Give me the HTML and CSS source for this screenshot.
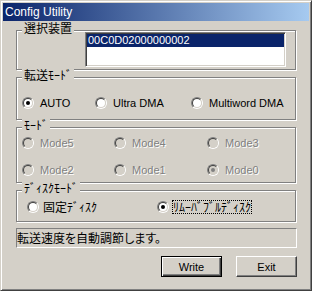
FILE: index.html
```html
<!DOCTYPE html>
<html lang="ja">
<head>
<meta charset="utf-8">
<title>Config Utility</title>
<link rel="stylesheet" href="styles.css">
</head>
<body>
<div class="window">
  <div class="titlebar">Config Utility</div>
  <div class="content">
    <div class="group g1">
      <span class="legend ja">選択装置</span>
      <div class="listbox">
        <div class="item selected">00C0D02000000002</div>
      </div>
    </div>

    <div class="group g2">
      <span class="legend ja">転送ﾓｰﾄﾞ</span>
      <div class="opts">
        <div class="opt"><span class="radio"><span class="radio-in"><span class="dot"></span></span></span><span>AUTO</span></div>
        <div class="opt"><span class="radio"><span class="radio-in"></span></span><span>Ultra DMA</span></div>
        <div class="opt"><span class="radio"><span class="radio-in"></span></span><span>Multiword DMA</span></div>
      </div>
    </div>

    <div class="group g3">
      <span class="legend ja">ﾓｰﾄﾞ</span>
      <div class="opts">
        <div class="opt disabled"><span class="radio"><span class="radio-in"></span></span><span>Mode5</span></div>
        <div class="opt disabled"><span class="radio"><span class="radio-in"></span></span><span>Mode4</span></div>
        <div class="opt disabled"><span class="radio"><span class="radio-in"></span></span><span>Mode3</span></div>
        <div class="opt disabled"><span class="radio"><span class="radio-in"></span></span><span>Mode2</span></div>
        <div class="opt disabled"><span class="radio"><span class="radio-in"></span></span><span>Mode1</span></div>
        <div class="opt disabled"><span class="radio"><span class="radio-in"><span class="dot"></span></span></span><span>Mode0</span></div>
      </div>
    </div>

    <div class="group g4">
      <span class="legend ja">ﾃﾞｨｽｸﾓｰﾄﾞ</span>
      <div class="opts">
        <div class="opt"><span class="radio"><span class="radio-in"></span></span><span class="ja">固定ﾃﾞｨｽｸ</span></div>
        <div class="opt"><span class="radio"><span class="radio-in"><span class="dot"></span></span></span><span class="ja focus">ﾘﾑｰﾊﾞﾌﾞﾙﾃﾞｨｽｸ</span></div>
      </div>
    </div>

    <div class="status ja">転送速度を自動調節します。</div>

    <div class="buttons">
      <div class="btn default">Write</div>
      <div class="btn">Exit</div>
    </div>
  </div>
</div>
</body>
</html>
```

FILE: styles.css
```css
html, body {
  margin: 0;
  padding: 0;
}

body {
  width: 312px;
  height: 291px;
  overflow: hidden;
  background: #d4d0c8;
  font-family: "Liberation Sans", Arial, sans-serif;
  font-size: 11px;
  color: #000;
}

.ja {
  font-family: "Noto Sans CJK JP", "Liberation Sans", sans-serif;
  font-size: 12px;
  line-height: 12px;
}

.window {
  box-sizing: border-box;
  width: 312px;
  height: 291px;
  border: 1px solid;
  border-color: #d4d0c8 #404040 #404040 #d4d0c8;
  box-shadow: inset 1px 1px #fff, inset -1px -1px #808080;
  padding: 2px;
  background: #d4d0c8;
  display: flex;
  flex-direction: column;
}

.titlebar {
  height: 18px;
  line-height: 18px;
  background: linear-gradient(to right, #0a246a, #a6caf0);
  color: #fff;
  font-size: 12px;
  padding-left: 2px;
}

.content {
  padding: 9px 0 0 13px;
  display: flex;
  flex-direction: column;
}

.group {
  position: relative;
  box-sizing: border-box;
  width: 280px;
  border: 1px solid #808080;
  box-shadow: inset 1px 1px #fff, 1px 1px #fff;
}

.legend {
  position: absolute;
  top: -9px;
  left: 5px;
  padding: 0 2px;
  background: #d4d0c8;
  white-space: nowrap;
}

.g1 {
  height: 40px;
  padding: 1px 0 0 68px;
}

.g2 {
  height: 43px;
  margin-top: 7px;
  padding: 19px 0 0 5px;
}

.g3 {
  height: 56px;
  margin-top: 7px;
  padding: 9px 0 0 5px;
}

.g4 {
  height: 32px;
  margin-top: 7px;
  padding: 10px 0 0 10px;
}

.listbox {
  box-sizing: border-box;
  width: 201px;
  height: 35px;
  background: #fff;
  border: 1px solid;
  border-color: #808080 #fff #fff #808080;
  box-shadow: inset 1px 1px #404040, inset -1px -1px #d4d0c8;
  padding: 1px;
}

.item {
  height: 13px;
  line-height: 13px;
  padding-left: 1px;
  font-size: 11px;
}

.item.selected {
  background: #0a246a;
  color: #fff;
}

.opts {
  display: grid;
  align-items: center;
}

.g2 .opts {
  grid-template-columns: 73px 96px auto;
}

.g3 .opts {
  grid-template-columns: 92px 93px auto;
  row-gap: 15px;
}

.g4 .opts {
  grid-template-columns: 130px auto;
}

.opt {
  display: flex;
  align-items: center;
  gap: 6px;
  height: 12px;
  white-space: nowrap;
}

.g4 .opt {
  gap: 4px;
}

.radio {
  box-sizing: border-box;
  width: 12px;
  height: 12px;
  flex: none;
  border-radius: 50%;
  border: 1px solid;
  border-color: #808080 #fff #fff #808080;
  display: flex;
}

.radio-in {
  box-sizing: border-box;
  width: 10px;
  height: 10px;
  border-radius: 50%;
  border: 1px solid;
  border-color: #404040 #d4d0c8 #d4d0c8 #404040;
  background: #fff;
  display: flex;
  align-items: center;
  justify-content: center;
}

.dot {
  width: 4px;
  height: 4px;
  border-radius: 50%;
  background: #000;
}

.disabled {
  color: #808080;
  text-shadow: 1px 1px 0 #fff;
}

.disabled .radio-in {
  background: #d4d0c8;
}

.disabled .dot {
  background: #808080;
}

.focus {
  outline: 1px dotted #000;
}

.status {
  box-sizing: border-box;
  width: 281px;
  height: 20px;
  margin-top: 6px;
  border: 1px solid;
  border-color: #808080 #fff #fff #808080;
  display: flex;
  align-items: center;
  font-feature-settings: "palt";
}

.buttons {
  display: flex;
  justify-content: flex-end;
  gap: 14px;
  width: 281px;
  margin-top: 8px;
}

.btn {
  box-sizing: border-box;
  width: 61px;
  height: 21px;
  display: flex;
  align-items: center;
  justify-content: center;
  font-size: 11px;
  border: 1px solid;
  border-color: #fff #404040 #404040 #fff;
  box-shadow: inset -1px -1px #808080;
}

.btn.default {
  border-color: #000;
  box-shadow: inset 1px 1px #fff, inset -1px -1px #404040, inset -2px -2px #808080;
}
```
